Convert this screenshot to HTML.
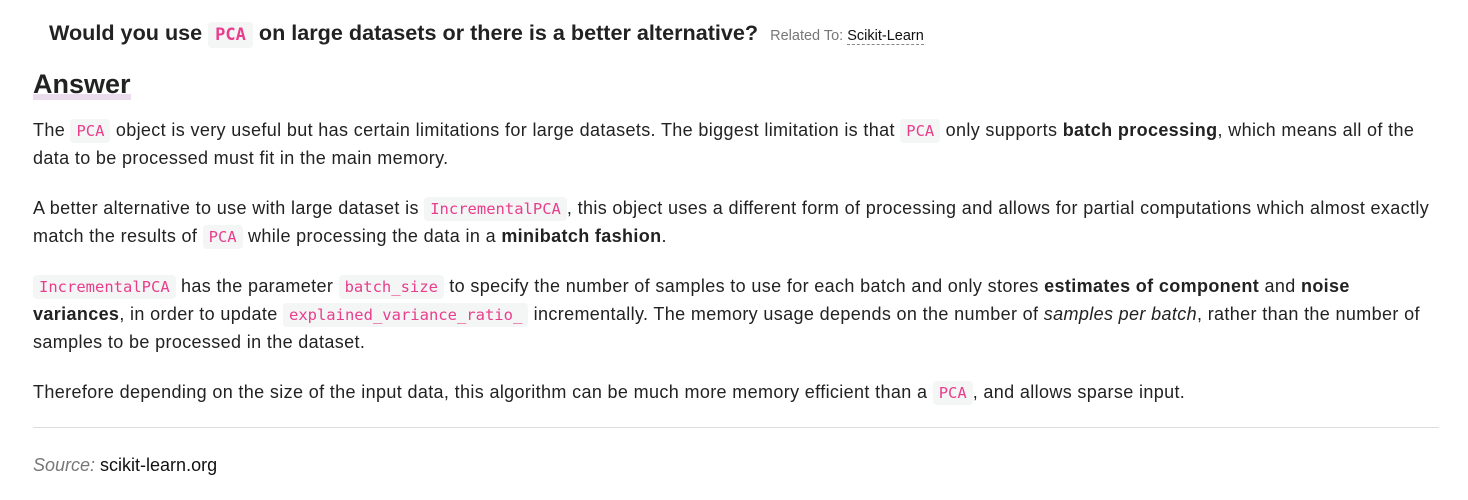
<!DOCTYPE html>
<html><head><meta charset="utf-8"><style>
body{margin:0;background:#fff;font-family:"Liberation Sans",Arial,sans-serif;color:#222;}
.wrap{position:absolute;left:33px;width:1406px;top:0}
h3{margin:0;position:absolute;left:16px;top:20px;font-size:21.6px;font-weight:bold;color:#222;white-space:nowrap}
h3 .rel{font-size:14.5px;font-weight:normal;color:#777;margin-left:6px}
h3 .rel span{color:#111;border-bottom:1px dashed #888}
h2{position:absolute;left:0;top:68px;margin:0;font-size:27px;font-weight:bold;line-height:32px;color:#222;background:linear-gradient(transparent 82%,#eadcec 82%)}
.body{position:absolute;left:0;top:116px;width:1406px;font-size:18px;letter-spacing:0.36px;line-height:28px;color:#222}
p{margin:0 0 22px}
code{font-family:"DejaVu Sans Mono","Liberation Mono",monospace;font-size:15.5px;line-height:1;letter-spacing:0;color:#e83e8c;background:#f4f5f5;border-radius:4px;padding:3px 6px}
h3 code{font-size:17px;padding:3px 7px}
hr{position:absolute;left:0;top:427px;width:1406px;margin:0;border:0;border-top:1px solid #ddd}
.src{position:absolute;left:0;top:455px;font-size:18px;color:#111}
.src i{color:#777}
</style></head><body><div class="wrap">
<h3>Would you use <code>PCA</code> on large datasets or there is a better alternative? <span class="rel">Related To: <span>Scikit-Learn</span></span></h3>
<h2>Answer</h2>
<div class="body">
<p>The <code>PCA</code> object is very useful but has certain limitations for large datasets. The biggest limitation is that <code>PCA</code> only supports <b>batch processing</b>, which means all of the data to be processed must fit in the main memory.</p>
<p>A better alternative to use with large dataset is <code>IncrementalPCA</code>, this object uses a different form of processing and allows for partial computations which almost exactly match the results of <code>PCA</code> while processing the data in a <b>minibatch fashion</b>.</p>
<p><code>IncrementalPCA</code> has the parameter <code>batch_size</code> to specify the number of samples to use for each batch and only stores <b>estimates of component</b> and <b>noise<br>variances</b>, in order to update <code>explained_variance_ratio_</code> incrementally. The memory usage depends on the number of <i>samples per batch</i>, rather than the number of samples to be processed in the dataset.</p>
<p>Therefore depending on the size of the input data, this algorithm can be much more memory efficient than a <code>PCA</code>, and allows sparse input.</p>
</div>
<hr>
<div class="src"><i>Source:</i> scikit-learn.org</div>
</div></body></html>
